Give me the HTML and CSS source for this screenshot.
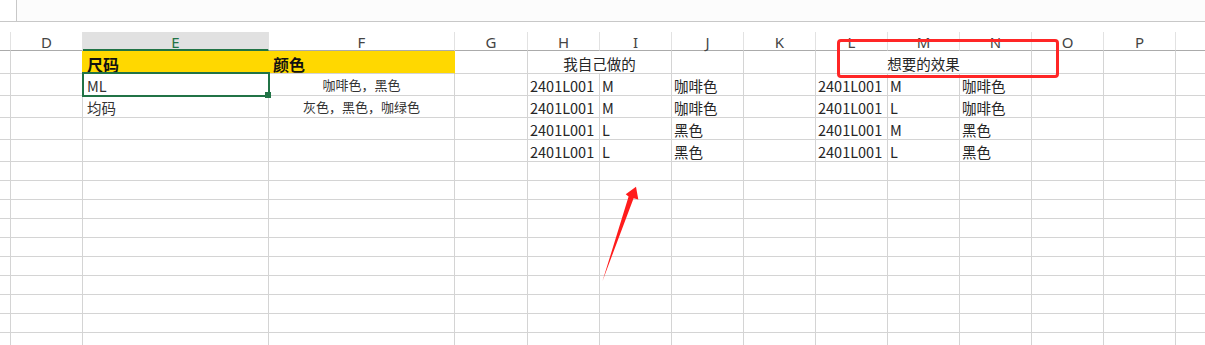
FILE: index.html
```html
<!DOCTYPE html>
<html lang="zh-CN">
<head>
    <meta charset="UTF-8">
    <title>表格</title>
    <link rel="stylesheet" href="styles.css">
</head>
<body>
    <div class="page">
        <div class="formula"><div class="formula-box"></div></div>

        <div class="sheet">
            <!-- 列标 -->
            <div class="row hdr">
                <div class="c rh"></div><div class="c d">D</div><div class="c e sel">E</div><div class="c f">F</div><div class="c g">G</div>
                <div class="c">H</div><div class="c">I</div><div class="c">J</div><div class="c">K</div><div class="c">L</div>
                <div class="c">M</div><div class="c">N</div><div class="c">O</div><div class="c">P</div><div class="c"></div>
            </div>

            <div class="row r1">
                <div class="c rh"></div><div class="c d yl-edge"></div><div class="c e yl">尺码</div><div class="c f yl">颜色</div><div class="c g"></div>
                <div class="c span2 ctr">我自己做的</div><div class="c"></div><div class="c"></div>
                <div class="c span3 ctr">想要的效果</div><div class="c"></div><div class="c"></div><div class="c"></div>
            </div>

            <div class="row">
                <div class="c rh"></div><div class="c d"></div><div class="c e">ML</div><div class="c f small">咖啡色，黑色</div><div class="c g"></div>
                <div class="c">2401L001</div><div class="c">M</div><div class="c">咖啡色</div><div class="c"></div>
                <div class="c">2401L001</div><div class="c">M</div><div class="c">咖啡色</div><div class="c"></div><div class="c"></div><div class="c"></div>
            </div>

            <div class="row">
                <div class="c rh"></div><div class="c d"></div><div class="c e">均码</div><div class="c f small">灰色，黑色，咖绿色</div><div class="c g"></div>
                <div class="c">2401L001</div><div class="c">M</div><div class="c">咖啡色</div><div class="c"></div>
                <div class="c">2401L001</div><div class="c">L</div><div class="c">咖啡色</div><div class="c"></div><div class="c"></div><div class="c"></div>
            </div>

            <div class="row">
                <div class="c rh"></div><div class="c d"></div><div class="c e"></div><div class="c f"></div><div class="c g"></div>
                <div class="c">2401L001</div><div class="c">L</div><div class="c">黑色</div><div class="c"></div>
                <div class="c">2401L001</div><div class="c">M</div><div class="c">黑色</div><div class="c"></div><div class="c"></div><div class="c"></div>
            </div>

            <div class="row">
                <div class="c rh"></div><div class="c d"></div><div class="c e"></div><div class="c f"></div><div class="c g"></div>
                <div class="c">2401L001</div><div class="c">L</div><div class="c">黑色</div><div class="c"></div>
                <div class="c">2401L001</div><div class="c">L</div><div class="c">黑色</div><div class="c"></div><div class="c"></div><div class="c"></div>
            </div>

            <!-- 空行 -->
            <div class="row sm"><div class="c rh"></div><div class="c d"></div><div class="c e"></div><div class="c f"></div><div class="c g"></div><div class="c"></div><div class="c"></div><div class="c"></div><div class="c"></div><div class="c"></div><div class="c"></div><div class="c"></div><div class="c"></div><div class="c"></div><div class="c"></div></div>
            <div class="row sm"><div class="c rh"></div><div class="c d"></div><div class="c e"></div><div class="c f"></div><div class="c g"></div><div class="c"></div><div class="c"></div><div class="c"></div><div class="c"></div><div class="c"></div><div class="c"></div><div class="c"></div><div class="c"></div><div class="c"></div><div class="c"></div></div>
            <div class="row sm"><div class="c rh"></div><div class="c d"></div><div class="c e"></div><div class="c f"></div><div class="c g"></div><div class="c"></div><div class="c"></div><div class="c"></div><div class="c"></div><div class="c"></div><div class="c"></div><div class="c"></div><div class="c"></div><div class="c"></div><div class="c"></div></div>
            <div class="row sm"><div class="c rh"></div><div class="c d"></div><div class="c e"></div><div class="c f"></div><div class="c g"></div><div class="c"></div><div class="c"></div><div class="c"></div><div class="c"></div><div class="c"></div><div class="c"></div><div class="c"></div><div class="c"></div><div class="c"></div><div class="c"></div></div>
            <div class="row sm"><div class="c rh"></div><div class="c d"></div><div class="c e"></div><div class="c f"></div><div class="c g"></div><div class="c"></div><div class="c"></div><div class="c"></div><div class="c"></div><div class="c"></div><div class="c"></div><div class="c"></div><div class="c"></div><div class="c"></div><div class="c"></div></div>
            <div class="row sm"><div class="c rh"></div><div class="c d"></div><div class="c e"></div><div class="c f"></div><div class="c g"></div><div class="c"></div><div class="c"></div><div class="c"></div><div class="c"></div><div class="c"></div><div class="c"></div><div class="c"></div><div class="c"></div><div class="c"></div><div class="c"></div></div>
            <div class="row sm"><div class="c rh"></div><div class="c d"></div><div class="c e"></div><div class="c f"></div><div class="c g"></div><div class="c"></div><div class="c"></div><div class="c"></div><div class="c"></div><div class="c"></div><div class="c"></div><div class="c"></div><div class="c"></div><div class="c"></div><div class="c"></div></div>
            <div class="row sm"><div class="c rh"></div><div class="c d"></div><div class="c e"></div><div class="c f"></div><div class="c g"></div><div class="c"></div><div class="c"></div><div class="c"></div><div class="c"></div><div class="c"></div><div class="c"></div><div class="c"></div><div class="c"></div><div class="c"></div><div class="c"></div></div>
            <div class="row sm"><div class="c rh"></div><div class="c d"></div><div class="c e"></div><div class="c f"></div><div class="c g"></div><div class="c"></div><div class="c"></div><div class="c"></div><div class="c"></div><div class="c"></div><div class="c"></div><div class="c"></div><div class="c"></div><div class="c"></div><div class="c"></div></div>
            <div class="row sm"><div class="c rh"></div><div class="c d"></div><div class="c e"></div><div class="c f"></div><div class="c g"></div><div class="c"></div><div class="c"></div><div class="c"></div><div class="c"></div><div class="c"></div><div class="c"></div><div class="c"></div><div class="c"></div><div class="c"></div><div class="c"></div></div>
        </div>

        <!-- 选中的单元格 -->
        <div class="selection"></div>
        <div class="handle"></div>

        <!-- 截图标注 -->
        <div class="mark"></div>
        <svg class="arrow" width="1205" height="345" viewBox="0 0 1205 345">
            <polygon points="602.5,281 633.6,198.2 638.3,199.6 636,186.8 625.7,194.3 628.6,196.6" fill="#ff1c1c"/>
        </svg>
    </div>
</body>
</html>
```

FILE: styles.css
```css
* {
    box-sizing: border-box;
}

body {
    margin: 0;
    background: #fff;
    font-family: "Noto Sans CJK SC", "Noto Sans", sans-serif;
    color: #262626;
}

.page {
    position: relative;
    width: 1205px;
    height: 345px;
    overflow: hidden;
}

.formula {
    height: 22px;
    padding-left: 16px;
    margin-bottom: 10px;
    border-bottom: 1px solid #c8c8c8;
}

.formula-box {
    height: 100%;
    border-left: 1px solid #c8c8c8;
    background: #fcfcfc;
}

.sheet {
    width: 1300px;
}

.row {
    display: flex;
    height: 22px;
}

.c {
    flex: none;
    width: 72px;
    display: flex;
    align-items: flex-end;
    padding: 0 2px 1px 2px;
    border-right: 1px solid #d4d4d4;
    border-bottom: 1px solid #d4d4d4;
    font-size: 14.5px;
    line-height: 16px;
    white-space: nowrap;
}

.rh { width: 11px; padding: 0; }
.e, .f { width: 186px; }
.e { padding-left: 4px; color: #333; }
.g { width: 73px; }
.span2 { width: 144px; }
.span3 { width: 216px; }

.ctr {
    justify-content: center;
}

.small {
    justify-content: center;
    font-size: 13px;
    color: #333;
    padding-bottom: 2px;
}

/* 列标 */
.hdr {
    height: 19px;
}

.hdr .c {
    justify-content: center;
    align-items: center;
    padding: 2px 0 0 0;
    border-right-color: #e2e2e2;
    border-bottom-color: #ababab;
    font-family: "Noto Sans", sans-serif;
    font-size: 15px;
    color: #444;
}

.hdr .sel {
    background: #e1e1e1;
    color: #217346;
    border-bottom: 2px solid #217346;
}

.r1 {
    height: 23px;
}

.yl {
    background: #ffd800;
    border-right-color: #ffd800;
    font-weight: bold;
    font-size: 16px;
    color: #111;
    padding-left: 4px;
}

.yl-edge {
    border-right-color: #ffd800;
}

.sm {
    height: 19px;
}

.selection {
    position: absolute;
    left: 82px;
    top: 72px;
    width: 188px;
    height: 25px;
    border: 2px solid #217346;
}

.handle {
    position: absolute;
    left: 265px;
    top: 92px;
    width: 6px;
    height: 6px;
    background: #217346;
}

.mark {
    position: absolute;
    left: 837px;
    top: 39px;
    width: 222px;
    height: 39px;
    border: 3px solid #ff2626;
    border-radius: 4px;
}

.arrow {
    position: absolute;
    left: 0;
    top: 0;
    pointer-events: none;
}
```
